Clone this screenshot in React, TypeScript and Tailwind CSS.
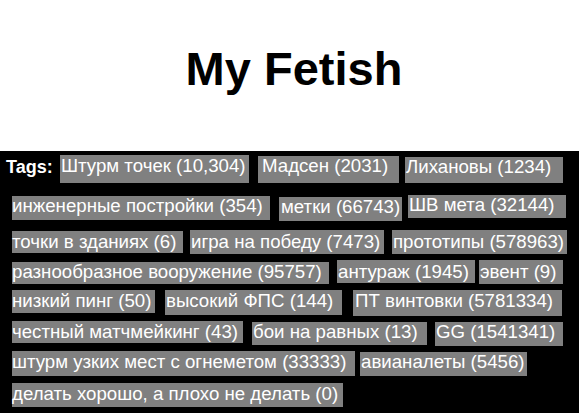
import React from "react";

type T = { t: string; c: string };

const rows: { h: string; tags: T[]; lead?: boolean }[] = [
  {
    h: "h-[40px]",
    lead: true,
    tags: [
      { t: "Штурм точек (10,304)", c: "ml-[6px] mt-[0px] w-[189px] h-[28px] pl-[1px] pt-[1px]" },
      { t: "Мадсен (2031)", c: "ml-[9px] mt-[1px] w-[141px] h-[27px] pl-[4px] pt-[0px]" },
      { t: "Лихановы (1234)", c: "ml-[6px] mt-[2px] w-[158px] h-[26px] pl-[1px] pt-[0px]" },
    ],
  },
  {
    h: "h-[35px]",
    tags: [
      { t: "инженерные постройки (354)", c: "ml-[12px] mt-[1px] w-[258px] h-[24px] pl-[0px] pt-[0px]" },
      { t: "метки (66743)", c: "ml-[9px] mt-[2px] w-[123px] h-[24px] pl-[2px] pt-[0px]" },
      { t: "ШВ мета (32144)", c: "ml-[6px] mt-[0px] w-[158px] h-[23px] pl-[1px] pt-[0px]" },
    ],
  },
  {
    h: "h-[30px]",
    tags: [
      { t: "точки в зданиях (6)", c: "ml-[12px] mt-[1px] w-[171px] h-[22px] pl-[0px] pt-[1px]" },
      { t: "игра на победу (7473)", c: "ml-[7px] mt-[0px] w-[194px] h-[24px] pl-[1px] pt-[2px]" },
      { t: "прототипы (578963)", c: "ml-[8px] mt-[0px] w-[175px] h-[24px] pl-[1px] pt-[2px]" },
    ],
  },
  {
    h: "h-[30px]",
    tags: [
      { t: "разнообразное вооружение (95757)", c: "ml-[12px] mt-[2px] w-[317px] h-[22px] pl-[0px] pt-[0px]" },
      { t: "антураж (1945)", c: "ml-[8px] mt-[0px] w-[138px] h-[23px] pl-[1px] pt-[2px]" },
      { t: "эвент (9)", c: "ml-[4px] mt-[0px] w-[84px] h-[24px] pl-[1px] pt-[2px]" },
    ],
  },
  {
    h: "h-[31px]",
    tags: [
      { t: "низкий пинг (50)", c: "ml-[12px] mt-[0px] w-[143px] h-[23px] pl-[0px] pt-[1px]" },
      { t: "высокий ФПС (144)", c: "ml-[10px] mt-[0px] w-[177px] h-[25px] pl-[1px] pt-[1px]" },
      { t: "ПТ винтовки (5781334)", c: "ml-[11px] mt-[0px] w-[209px] h-[26px] pl-[2px] pt-[1px]" },
    ],
  },
  {
    h: "h-[30px]",
    tags: [
      { t: "честный матчмейкинг (43)", c: "ml-[12px] mt-[0px] w-[231px] h-[22px] pl-[0px] pt-[1px]" },
      { t: "бои на равных (13)", c: "ml-[9px] mt-[1px] w-[175px] h-[23px] pl-[1px] pt-[0px]" },
      { t: "GG (1541341)", c: "ml-[8px] mt-[1px] w-[128px] h-[24px] pl-[1px] pt-[0px]" },
    ],
  },
  {
    h: "h-[32px]",
    tags: [
      { t: "штурм узких мест с огнеметом (33333)", c: "ml-[12px] mt-[0px] w-[343px] h-[25px] pl-[0px] pt-[1px]" },
      { t: "авианалеты (5456)", c: "ml-[5px] mt-[1px] w-[167px] h-[24px] pl-[1px] pt-[0px]" },
    ],
  },
  {
    h: "h-[30px]",
    tags: [
      { t: "делать хорошо, а плохо не делать (0)", c: "ml-[12px] mt-[0px] w-[331px] h-[24px] pl-[0px] pt-[1px]" },
    ],
  },
];

export default function App() {
  return (
    <div className="w-[579px] h-[413px] bg-white font-['Liberation_Sans',Arial,sans-serif] overflow-hidden">
      <div className="h-[151px] bg-white flex justify-center pt-[45px] pl-[9px]">
        <h1 className="text-[47px] leading-[47px] font-bold text-black m-0">My Fetish</h1>
      </div>
      <div className="h-[262px] bg-black pt-[4px]">
        {rows.map((r, i) => (
          <div key={i} className={`flex items-start ${r.h}`}>
            {r.lead && (
              <span className="ml-[6px] mt-[2px] w-[48px] shrink-0 text-white font-bold text-[18px] leading-[20px] whitespace-nowrap">
                Tags:
              </span>
            )}
            {r.tags.map((tg, j) => (
              <span
                key={j}
                className={`block bg-[#808080] text-white text-[18.67px] leading-[20px] whitespace-nowrap shrink-0 ${tg.c}`}
              >
                {tg.t}
              </span>
            ))}
          </div>
        ))}
      </div>
    </div>
  );
}
